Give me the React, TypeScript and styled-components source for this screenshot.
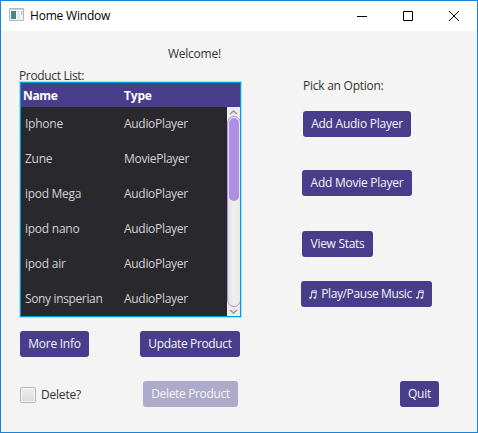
import React from 'react';
import styled, { createGlobalStyle } from 'styled-components';

const GlobalStyle = createGlobalStyle`
  * { box-sizing: border-box; }
  body { margin: 0; background: #f4f4f4; }
  button { font: inherit; }
`;

const Window = styled.main`
  width: 478px;
  height: 433px;
  border: 1px solid #1883d7;
  background: #f4f4f4;
  display: flex;
  flex-direction: column;
  overflow: hidden;
  color: #333;
  font: 12px/16px 'Open Sans', 'Noto Sans', sans-serif;
  white-space: nowrap;
`;

const TitleBar = styled.header`
  flex: none;
  height: 30px;
  padding-left: 8px;
  display: flex;
  align-items: center;
  background: #fff;
  color: #000;
`;

const Title = styled.span`
  flex: 1;
  padding-left: 6px;
  letter-spacing: -0.2px;
`;

const WindowControl = styled.span`
  width: 46px;
  height: 30px;
  display: grid;
  place-items: center;
`;

const Content = styled.div`
  flex: 1;
  display: flex;
`;

const LeftPane = styled.section`
  width: 241px;
  padding-left: 18px;
  display: flex;
  flex-direction: column;
`;

const RightPane = styled.section`
  flex: 1;
  padding: 47px 0 0 59px;
  display: flex;
  flex-direction: column;
  align-items: flex-start;
`;

const Label = styled.span<{ $track?: number }>`
  display: block;
  letter-spacing: ${p => p.$track ?? -0.25}px;
`;

const Welcome = styled(Label)`
  margin: 15px 0 0 149px;
`;

const ListLabel = styled(Label)`
  margin-top: 6px;
  height: 13px;
  line-height: 16px;
`;

const Table = styled.div`
  width: 223px;
  height: 237px;
  flex: none;
  padding: 1px;
  border: 1px solid #a5dcf0;
  background: #039ed3;
  display: flex;
  flex-direction: column;
`;

const TableHead = styled.div`
  flex: none;
  height: 24px;
  padding: 2px 0 0 2px;
  display: grid;
  grid-template-columns: 101px 1fr;
  align-items: center;
  background: #483d8b;
  color: #fff;
  font-weight: 700;
`;

const TableBody = styled.div`
  flex: 1;
  min-height: 0;
  display: flex;
  background: #29282d;
  overflow: hidden;
`;

const Rows = styled.div`
  flex: 1;
`;

const Row = styled.div`
  height: 35px;
  padding: 0 0 1px 4px;
  display: grid;
  grid-template-columns: 99px 1fr;
  align-items: center;
  color: #d3d3d3;
`;

const ScrollBar = styled.div`
  width: 13px;
  display: flex;
  flex-direction: column;
  background: #ececec;
`;

const ScrollArrow = styled.div`
  height: 9px;
  flex: none;
  display: grid;
  place-items: center;
`;

const Track = styled.div`
  flex: 1;
  margin-right: -1px;
  padding: 1px;
  border: 1px solid #ae8be6;
  border-radius: 7px;
  background: linear-gradient(to right, #e2e2e2, #f0f0f0 50%, #e8e8e8);
`;

const Thumb = styled.div`
  height: 83px;
  border-radius: 5px;
  background: #af8ee6;
`;

const ButtonRow = styled.div<{ $top: number; $gap: number }>`
  display: flex;
  align-items: center;
  height: 26px;
  margin-top: ${p => p.$top}px;
  padding-left: 1px;
  gap: ${p => p.$gap}px;
`;

const Button = styled.button<{ $width: number; $track?: number }>`
  width: ${p => p.$width}px;
  height: 26px;
  flex: none;
  padding: 0;
  border: 0;
  border-radius: 3px;
  background: #483d8b;
  color: #f4f4f4;
  letter-spacing: ${p => p.$track ?? -0.25}px;
  display: flex;
  align-items: center;
  justify-content: center;
  gap: 4px;
  &:disabled { opacity: 0.4; }
`;

const Placed = styled.div<{ $top: number; $left: number }>`
  margin: ${p => p.$top}px 0 0 ${p => p.$left}px;
`;

const CheckLabel = styled.label`
  width: 71px;
  display: flex;
  align-items: center;
  gap: 5px;
  margin-top: 2px;
  letter-spacing: -0.2px;
`;

const CheckBox = styled.span`
  width: 16px;
  height: 16px;
  border: 1px solid #b5b5b5;
  border-radius: 2px;
  background: linear-gradient(#efefef, #dcdcdc);
  box-shadow: inset 0 0 0 1px #f8f8f8;
`;

const IconSlot = styled.span`
  display: flex;
  padding-bottom: 3px;
`;

const AppIcon = () => (
  <svg width="15" height="13" viewBox="0 0 15 13">
    <path d="M.5.5h14v12H.5z" fill="#f4f6f7" stroke="#b3b9bc" />
    <path d="M1 1h13v1H1z" fill="#ccd2d6" />
    <path d="M2 3h5v8H2z" fill="#3f8a80" />
    <path d="M2 3h2v8H2z" fill="#53829f" />
    <path d="M8 3h3v8H8z" fill="#e4e9ef" />
    <path d="M12 3h1.5v4H12z" fill="#b9c9d5" />
  </svg>
);

const Arrow = ({ d }: { d: string }) => (
  <svg width="9" height="6" viewBox="0 0 9 6">
    <path d={d} fill="none" stroke="#969696" strokeWidth="1.5" />
  </svg>
);

const Notes = () => (
  <svg width="8" height="9" viewBox="0 0 8 9">
    <path d="M2.2 7.6L3 .8h4.4L6.7 7.6M2.8 2.5h4.4" fill="none" stroke="#f4f4f4" strokeWidth=".9" />
    <ellipse cx="1.4" cy="7.7" rx="1.3" ry="1" fill="#f4f4f4" />
    <ellipse cx="5.8" cy="7.7" rx="1.3" ry="1" fill="#f4f4f4" />
  </svg>
);

const products = [
  { name: 'Iphone', type: 'AudioPlayer', track: -0.25 },
  { name: 'Zune', type: 'MoviePlayer', track: -0.25 },
  { name: 'ipod Mega', type: 'AudioPlayer', track: -0.3 },
  { name: 'ipod nano', type: 'AudioPlayer', track: -0.25 },
  { name: 'ipod air', type: 'AudioPlayer', track: -0.25 },
  { name: 'Sony insperian', type: 'AudioPlayer', track: -0.36 },
];

export default function App() {
  return (
    <>
      <GlobalStyle />
      <Window>
        <TitleBar>
          <IconSlot><AppIcon /></IconSlot>
          <Title>Home Window</Title>
          <WindowControl>
            <svg width="10" height="10"><path d="M0 5.5h10" stroke="#000" /></svg>
          </WindowControl>
          <WindowControl>
            <svg width="10" height="10"><path d="M.5.5h9v9h-9z" fill="none" stroke="#000" /></svg>
          </WindowControl>
          <WindowControl>
            <svg width="10" height="10"><path d="M0 0l10 10M10 0L0 10" stroke="#000" /></svg>
          </WindowControl>
        </TitleBar>
        <Content>
          <LeftPane>
            <Welcome>Welcome!</Welcome>
            <ListLabel $track={-0.35}>Product List:</ListLabel>
            <Table>
              <TableHead>
                <Label $track={-0.35}>Name</Label>
                <Label $track={-0.2}>Type</Label>
              </TableHead>
              <TableBody>
                <Rows>
                  {products.map(p => (
                    <Row key={p.name}>
                      <Label $track={p.track}>{p.name}</Label>
                      <Label $track={-0.3}>{p.type}</Label>
                    </Row>
                  ))}
                </Rows>
                <ScrollBar>
                  <ScrollArrow><Arrow d="M1 5l3.5-3L8 5" /></ScrollArrow>
                  <Track><Thumb /></Track>
                  <ScrollArrow><Arrow d="M1 1l3.5 3L8 1" /></ScrollArrow>
                </ScrollBar>
              </TableBody>
            </Table>
            <ButtonRow $top={13} $gap={51}>
              <Button $width={69}>More Info</Button>
              <Button $width={100} $track={-0.35}>Update Product</Button>
            </ButtonRow>
            <ButtonRow $top={24} $gap={52}>
              <CheckLabel><CheckBox />Delete?</CheckLabel>
              <Button $width={95} $track={-0.35} disabled>Delete Product</Button>
            </ButtonRow>
          </LeftPane>
          <RightPane>
            <Placed $top={0} $left={2}><Label>Pick an Option:</Label></Placed>
            <Placed $top={17} $left={2}><Button $width={108}>Add Audio Player</Button></Placed>
            <Placed $top={33} $left={1}><Button $width={110}>Add Movie Player</Button></Placed>
            <Placed $top={35} $left={1}><Button $width={71} $track={-0.3}>View Stats</Button></Placed>
            <Placed $top={24} $left={0}>
              <Button $width={131} $track={-0.38}><Notes /><span>Play/Pause Music</span><Notes /></Button>
            </Placed>
            <Placed $top={74} $left={99}><Button $width={39}>Quit</Button></Placed>
          </RightPane>
        </Content>
      </Window>
    </>
  );
}
